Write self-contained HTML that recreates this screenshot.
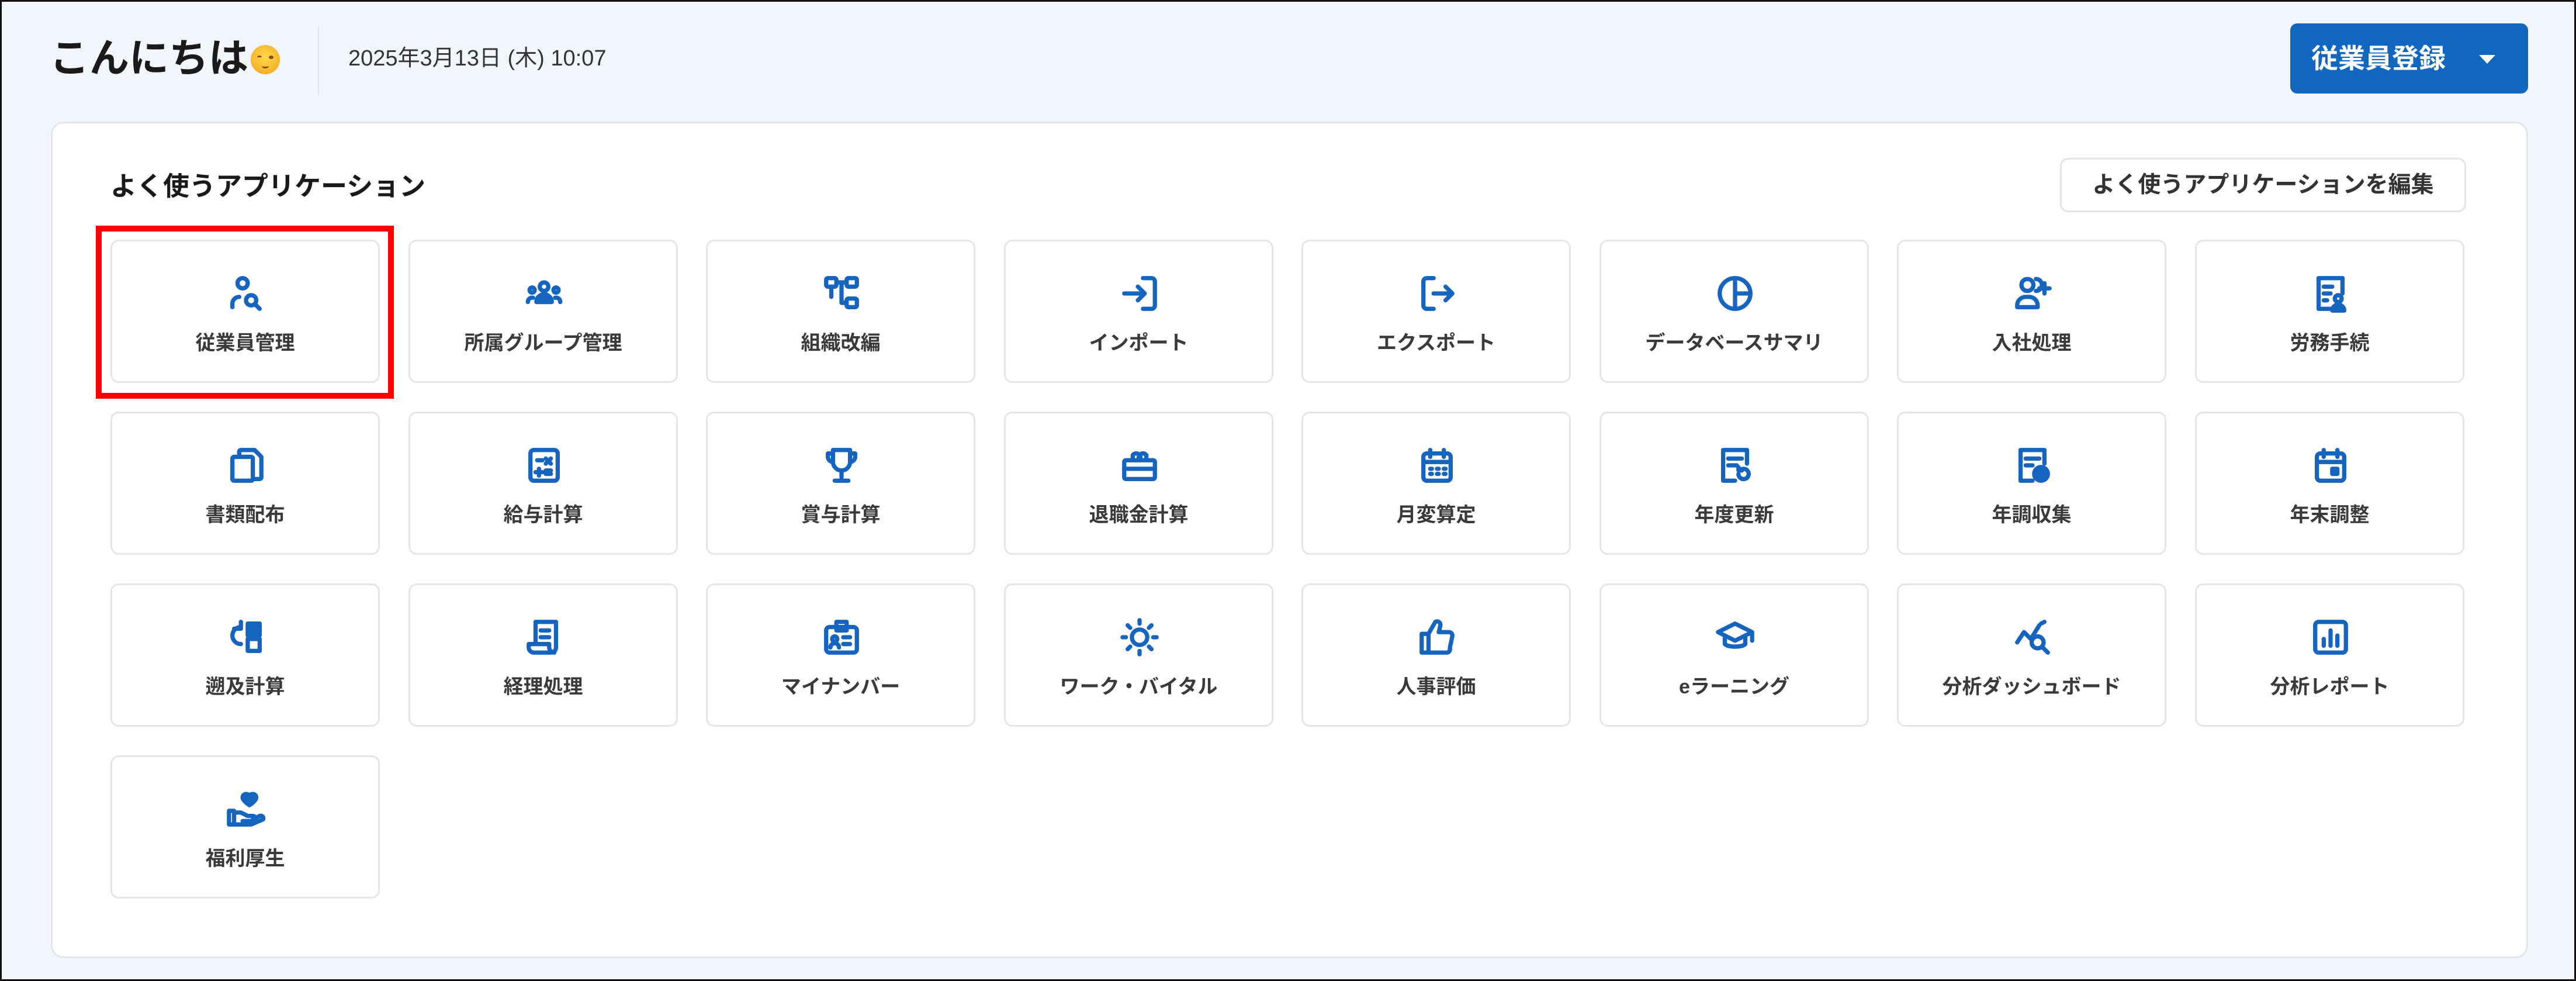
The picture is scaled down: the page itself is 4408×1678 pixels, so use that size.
<!DOCTYPE html>
<html><head><meta charset="utf-8">
<style>
*{box-sizing:border-box;margin:0;padding:0}
html,body{width:4408px;height:1678px;overflow:hidden}
body{background:#f2f6fc;font-family:"Liberation Sans","Noto Sans CJK JP",sans-serif;color:#222;position:relative;border:3px solid #111}
.greet{position:absolute;left:82px;top:52px;font-size:68px;font-weight:700;color:#1a1a1a;line-height:90px}
.emo{display:inline-block;width:50px;height:50px;border-radius:50%;background:radial-gradient(circle at 50% 40%,#ffd84a,#f3a21c);vertical-align:-4px;margin-left:4px;position:relative}
.emo:before{content:"";position:absolute;left:11px;top:18px;width:8px;height:3px;border-top:3px solid #8a4a10;border-radius:50%;box-shadow:20px 0 0 #8a4a10}
.emo:after{content:"";position:absolute;left:19px;top:32px;width:12px;height:5px;border-bottom:3px solid #8a4a10;border-radius:50%}
.div{position:absolute;left:541px;top:42px;width:2px;height:118px;background:#dde3ea}
.date{position:absolute;left:593px;top:74px;font-size:38px;color:#333;line-height:46px}
.btn{position:absolute;left:3916px;top:37px;width:407px;height:120px;background:#1166c0;border-radius:12px;color:#fff;font-size:46px;font-weight:700;line-height:120px;padding-left:36px}
.btn:after{content:"";position:absolute;right:56px;top:54px;border-left:14px solid transparent;border-right:14px solid transparent;border-top:15px solid #fff}
.main{position:absolute;left:84px;top:205px;width:4239px;height:1431px;background:#fff;border:3px solid #e3e7ec;border-radius:22px}
.h{position:absolute;left:186px;top:288px;font-size:45px;font-weight:700;line-height:56px;color:#1a1a1a}
.edit{position:absolute;left:3522px;top:267px;width:695px;height:93px;border:3px solid #e2e5e9;border-radius:14px;background:#fff;font-size:39px;line-height:87px;text-align:center;color:#333;font-weight:700}
.card{position:absolute;width:461px;height:245px;border:3px solid #e3e6ea;border-radius:14px;background:#fff;text-align:center}
.card svg{position:absolute;left:194px;top:54px;width:70px;height:70px}
.card span{position:absolute;left:0;right:0;top:152px;font-size:34px;font-weight:700;color:#3a3a3a;line-height:44px}
svg{fill:none;stroke:#1565c0;stroke-width:2.5;stroke-linecap:round;stroke-linejoin:round}
.red{position:absolute;left:161px;top:383px;width:510px;height:296px;border:10px solid #f00}
</style></head><body>
<div class="greet">こんにちは<span class="emo"></span></div>
<div class="div"></div>
<div class="date">2025年3月13日 (木) 10:07</div>
<div class="btn">従業員登録</div>
<div class="main"></div>
<div class="h">よく使うアプリケーション</div>
<div class="edit">よく使うアプリケーションを編集</div>

<div class="card" style="left:186px;top:407px"><svg viewBox="0 0 24 24"><circle cx="10" cy="6" r="3"/><path d="M4 20v-2a4 4 0 0 1 4-4"/><circle cx="15" cy="16" r="3"/><path d="M17.2 18.2 20 21"/></svg><span>従業員管理</span></div>
<div class="card" style="left:696px;top:407px"><svg viewBox="0 0 24 24"><circle cx="12" cy="8" r="2.5"/><circle cx="5" cy="10" r="1.5"/><circle cx="19" cy="10" r="1.5"/><path d="M7.5 17a4.5 4.5 0 0 1 9 0z" fill="#1565c0"/><path d="M2.5 17a2.5 2.5 0 0 1 3-2.5M21.5 17a2.5 2.5 0 0 0-3-2.5"/></svg><span>所属グループ管理</span></div>
<div class="card" style="left:1205px;top:407px"><svg viewBox="0 0 24 24"><rect x="3" y="3" width="6" height="5" rx="1"/><rect x="15" y="3" width="6" height="5" rx="1"/><rect x="15" y="15" width="6" height="5" rx="1"/><path d="M9 5.5h6M12 5.5v12h3M6 8v6"/></svg><span>組織改編</span></div>
<div class="card" style="left:1715px;top:407px"><svg viewBox="0 0 24 24"><path d="M14 3h5a2 2 0 0 1 2 2v14a2 2 0 0 1-2 2h-5M3 12h12M11 8l4 4-4 4"/></svg><span>インポート</span></div>
<div class="card" style="left:2224px;top:407px"><svg viewBox="0 0 24 24"><path d="M10 3H6a2 2 0 0 0-2 2v14a2 2 0 0 0 2 2h4M10 12h11M17 8l4 4-4 4"/></svg><span>エクスポート</span></div>
<div class="card" style="left:2734px;top:407px"><svg viewBox="0 0 24 24"><circle cx="12" cy="12" r="9"/><path d="M12 3v18M12 12h9"/></svg><span>データベースサマリ</span></div>
<div class="card" style="left:3243px;top:407px"><svg viewBox="0 0 24 24"><circle cx="9" cy="7" r="3.5"/><path d="M3 20v-1a5 5 0 0 1 5-5h2a5 5 0 0 1 5 5v1zM14 3.5a3.5 3.5 0 0 1 0 7M19 6v6M16 9h6"/></svg><span>入社処理</span></div>
<div class="card" style="left:3753px;top:407px"><svg viewBox="0 0 24 24"><path d="M12 21H5V3h14v9M8 8h5M8 12h4M8 16h2"/><circle cx="16.5" cy="15" r="2"/><path d="M13 22a3.5 3.5 0 0 1 7 0z" fill="#1565c0"/></svg><span>労務手続</span></div>

<div class="card" style="left:186px;top:701px"><svg viewBox="0 0 24 24"><path d="M8 6V4a1 1 0 0 1 1-1h8l4 4v12a1 1 0 0 1-1 1h-3"/><rect x="4" y="7" width="12" height="14" rx="1"/></svg><span>書類配布</span></div>
<div class="card" style="left:696px;top:701px"><svg viewBox="0 0 24 24"><rect x="4" y="3" width="16" height="18" rx="2"/><path d="M8 9h3M13 8l3 3M16 8l-3 3M7 16h4M9 14v4M13 15h3M13 17h3"/></svg><span>給与計算</span></div>
<div class="card" style="left:1205px;top:701px"><svg viewBox="0 0 24 24"><path d="M7 3h10v7a5 5 0 0 1-10 0zM7 5H4v2a3 3 0 0 0 3 3M17 5h3v2a3 3 0 0 1-3 3M12 15v4M8 21h8"/></svg><span>賞与計算</span></div>
<div class="card" style="left:1715px;top:701px"><svg viewBox="0 0 24 24"><rect x="3" y="9" width="18" height="11" rx="1"/><path d="M3 14h18M8 9V6a2 2 0 0 1 4 3 2 2 0 0 1 4-3v3"/></svg><span>退職金計算</span></div>
<div class="card" style="left:2224px;top:701px"><svg viewBox="0 0 24 24"><rect x="4" y="5" width="16" height="16" rx="2"/><path d="M4 10h16M8 3v4M16 3v4M8 14h1M12 14h1M16 14h1M8 17h1M12 17h1M16 17h1"/></svg><span>月変算定</span></div>
<div class="card" style="left:2734px;top:701px"><svg viewBox="0 0 24 24"><path d="M12 21H5V3h14v8M8 8h8M8 12h5"/><path d="M14 17a3 3 0 1 0 1-2.2M14 13v2h2"/></svg><span>年度更新</span></div>
<div class="card" style="left:3243px;top:701px"><svg viewBox="0 0 24 24"><path d="M12 21H5V3h14v8M8 8h8M8 12h4"/><circle cx="17" cy="17" r="4" fill="#1565c0"/></svg><span>年調収集</span></div>
<div class="card" style="left:3753px;top:701px"><svg viewBox="0 0 24 24"><rect x="4" y="5" width="16" height="16" rx="2"/><path d="M4 10h16M8 3v4M16 3v4"/><rect x="13" y="14" width="3" height="3" fill="#1565c0"/></svg><span>年末調整</span></div>

<div class="card" style="left:186px;top:995px"><svg viewBox="0 0 24 24"><path d="M9 6a5 5 0 1 0 0 10M9 3v4H5"/><rect x="13" y="4" width="7" height="7" fill="#1565c0"/><rect x="13" y="13" width="7" height="7"/></svg><span>遡及計算</span></div>
<div class="card" style="left:696px;top:995px"><svg viewBox="0 0 24 24"><path d="M7 3h12v15a3 3 0 0 1-3 3H6a3 3 0 0 1-3-3v-2h12v2a3 3 0 0 0 3 3M10 8h5M10 12h5M7 3v13"/></svg><span>経理処理</span></div>
<div class="card" style="left:1205px;top:995px"><svg viewBox="0 0 24 24"><rect x="3" y="6" width="18" height="15" rx="2"/><path d="M9 3h6v5H9zM13 12h4M13 16h4"/><circle cx="8" cy="13" r="1.5"/><path d="M5.5 18a2.5 2.5 0 0 1 5 0"/></svg><span>マイナンバー</span></div>
<div class="card" style="left:1715px;top:995px"><svg viewBox="0 0 24 24"><circle cx="12" cy="12" r="4.5"/><path d="M12 2v2M12 20v2M2 12h2M20 12h2M5 5l1.5 1.5M17.5 17.5 19 19M5 19l1.5-1.5M17.5 6.5 19 5"/></svg><span>ワーク・バイタル</span></div>
<div class="card" style="left:2224px;top:995px"><svg viewBox="0 0 24 24"><path d="M7 10v11H3V10zM7 10l4-7a2 2 0 0 1 3 2l-1 4h6a2 2 0 0 1 2 2.3l-1.5 7A2 2 0 0 1 17.5 21H7"/></svg><span>人事評価</span></div>
<div class="card" style="left:2734px;top:995px"><svg viewBox="0 0 24 24"><path d="M2 9l10-5 10 5-10 5zM6 11v5c2 2 10 2 12 0v-5M22 9v5"/></svg><span>eラーニング</span></div>
<div class="card" style="left:3243px;top:995px"><svg viewBox="0 0 24 24"><path d="M3 15l4-6 4 4 5-8M17 4l2-1"/><circle cx="15" cy="15" r="3.5"/><path d="M17.5 17.5 21 21"/></svg><span>分析ダッシュボード</span></div>
<div class="card" style="left:3753px;top:995px"><svg viewBox="0 0 24 24"><rect x="3" y="3" width="18" height="18" rx="2"/><path d="M8 17v-4M12 17V8M16 17v-6"/></svg><span>分析レポート</span></div>

<div class="card" style="left:186px;top:1289px"><svg viewBox="0 0 24 24"><path d="M14 4c1.5-1.5 4-1 4 1.2 0 2-4 4.5-4 4.5s-4-2.5-4-4.5C10 3 12.5 2.5 14 4z" fill="#1565c0"/><path d="M2 13h3v8H2zM5 14h4l4 2h3a1.5 1.5 0 0 1 0 3H10M16 18l4-2a1.5 1.5 0 0 1 2 2l-7 3H5"/></svg><span>福利厚生</span></div>

<div class="red"></div>
</body></html>
